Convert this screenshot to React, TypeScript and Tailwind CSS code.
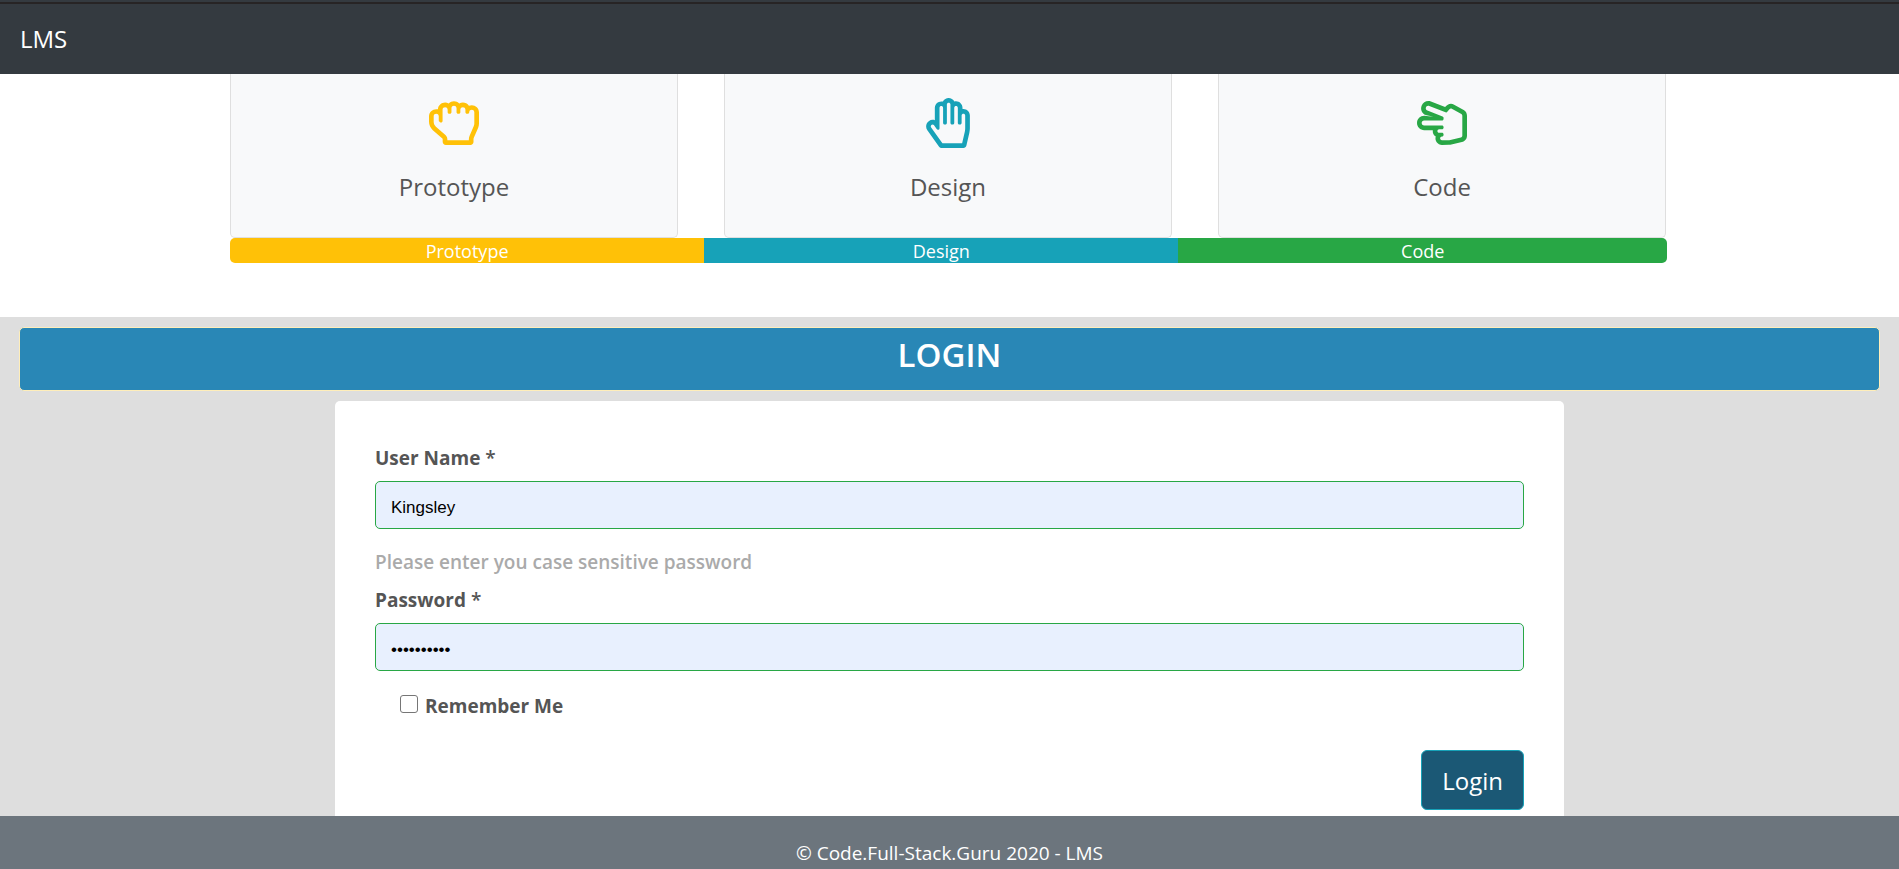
import React from "react";
import { FaRegHandPaper, FaRegHandRock, FaRegHandScissors } from "react-icons/fa";

const stages = [
  { name: "Prototype", Icon: FaRegHandRock, text: "text-[#ffc107]", bar: "bg-[#ffc107] w-[33%]" },
  { name: "Design", Icon: FaRegHandPaper, text: "text-[#17a2b8]", bar: "bg-[#17a2b8] w-[33%]" },
  { name: "Code", Icon: FaRegHandScissors, text: "text-[#28a745]", bar: "bg-[#28a745] w-[34%]" },
];

const inputClass =
  "block h-12 w-full rounded-[5px] border border-[#28a745] bg-[#e8f0fe] px-[15px] pt-1.5 font-['Liberation_Sans',Arial,sans-serif] text-[17px] font-normal text-black outline-none";

function Stages() {
  return (
    <section className="mx-auto w-[92%] max-w-[1439px] pr-0.5 pb-[54px]">
      <div className="grid grid-cols-3 gap-[46px] pr-px">
        {stages.map(({ name, Icon, text }) => (
          <div
            key={name}
            className="flex h-[164px] flex-col items-center rounded-b-[5px] border-x border-b border-[#dfdfdf] bg-[#f8f9fa] pt-6"
          >
            <Icon className={`size-[50px] ${text}`} aria-hidden="true" />
            <h2 className="mt-[21px] text-2xl leading-9 text-[#555]">{name}</h2>
          </div>
        ))}
      </div>
      <div className="flex h-[25px] overflow-hidden rounded-[5px] text-center text-lg leading-[26px] text-white">
        {stages.map(({ name, bar }) => (
          <div key={name} className={bar}>
            {name}
          </div>
        ))}
      </div>
    </section>
  );
}

function LoginForm() {
  return (
    <form
      className="mx-auto mt-2.5 w-[90%] max-w-[1229px] rounded-[5px] bg-white px-10 pt-[42px] pb-16 text-[19px] leading-[30px] font-bold text-[#555]"
      onSubmit={(event) => event.preventDefault()}
    >
      <label htmlFor="username" className="mb-2 block">
        User Name <span className="font-semibold">*</span>
      </label>
      <input id="username" type="text" defaultValue="Kingsley" className={inputClass} />
      <p className="mt-[18px] font-semibold text-[#aaa]">Please enter you case sensitive password</p>
      <label htmlFor="password" className="mt-2 mb-2 block">
        Password <span className="font-semibold">*</span>
      </label>
      <input id="password" type="password" defaultValue="fullstack1" className={inputClass} />
      <div className="mt-5 flex items-center gap-[7px] pl-[25px]">
        <input
          id="remember"
          type="checkbox"
          className="mb-1 size-[18px] appearance-none rounded-[3px] border border-[#767676] bg-white checked:bg-[#0075ff]"
        />
        <label htmlFor="remember">Remember Me</label>
      </div>
      <div className="mt-[29px] flex justify-end">
        <button
          type="submit"
          className="h-[60px] rounded-[6px] border border-[#17a2b8] bg-[#1b5875] px-5 pt-0.5 text-2xl font-normal text-white"
        >
          Login
        </button>
      </div>
    </form>
  );
}

export default function App() {
  return (
    <div className="flex h-screen flex-col bg-white font-['Open_Sans','Noto_Sans',sans-serif]">
      <header className="shrink-0 border-t-2 border-[#343a40] bg-[#343a40]">
        <nav className="flex h-[72px] items-center border-t-2 border-[#272425] px-5">
          <a href="#" className="text-2xl text-white">
            LMS
          </a>
        </nav>
      </header>
      <main className="flex min-h-0 flex-1 flex-col overflow-hidden">
        <Stages />
        <section className="flex-1 bg-[#dedede] px-[19px] pt-2.5">
          <h1 className="h-16 rounded-[5px] border border-[#ffeeba] bg-[#2987b6] text-center text-[33px] leading-[54px] font-semibold text-white">
            LOGIN
          </h1>
          <LoginForm />
        </section>
      </main>
      <footer className="h-[53px] shrink-0 bg-[#6c757d] pt-[22px] text-center text-[19px] leading-[30px] text-white">
        © Code.Full-Stack.Guru 2020 - LMS
      </footer>
    </div>
  );
}
